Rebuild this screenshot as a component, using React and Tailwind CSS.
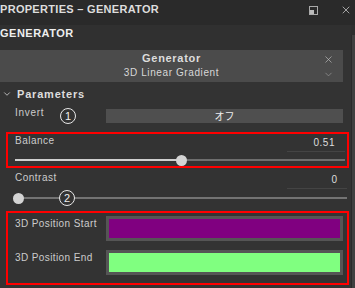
import React from 'react';
import { X, ChevronDown } from 'lucide-react';

const font = { fontFamily: '"Liberation Sans", "Noto Sans CJK JP", sans-serif' };

const Badge = ({ n }) => (
  <span className="w-[16px] h-[16px] rounded-full border-[1.5px] border-[#e8e8e8] bg-[#333] text-[#eee] text-[11px] leading-none flex items-center justify-center">
    {n}
  </span>
);

const Slider = ({ pos, filled }) => (
  <div className="relative h-[10px] ml-[7px] mr-[2px]">
    <div className="absolute left-0 right-0 top-[4px] h-[2px] bg-[#6e6e6e]" />
    {filled && <div className="absolute left-0 top-[4px] h-[2px] bg-[#cfcfcf]" style={{ width: pos }} />}
    <div className="absolute top-0 w-[11px] h-[11px] -ml-[5px] rounded-full bg-[#d4d4d4]" style={{ left: pos }} />
  </div>
);

export default function App() {
  return (
    <div className="w-[355px] h-[288px] bg-[#333] overflow-hidden flex flex-col text-[#e6e6e6]" style={font}>
      {/* Title bar */}
      <div className="h-[25px] bg-[#2a2a2a] flex items-start justify-between shrink-0">
        <span className="text-[11px] font-bold tracking-[0.3px] text-[#ddd] leading-[14px] pt-[2px]">PROPERTIES – GENERATOR</span>
        <div className="flex items-center gap-[22px] pr-[3px] pt-[4px]">
          <div className="w-[9px] h-[9px] border border-[#aaa] relative">
            <div className="absolute left-0 bottom-0 w-[4px] h-[4px] bg-[#bbb]" />
          </div>
          <X className="w-[12px] h-[12px] text-[#ccc]" strokeWidth={1.5} />
        </div>
      </div>

      <div className="flex flex-1">
        <div className="flex-1 flex flex-col">
          <div className="h-[25px] bg-[#303030] flex items-start">
            <span className="text-[11px] font-bold tracking-[0.5px] text-[#eee] leading-[14px] pt-[1px]">GENERATOR</span>
          </div>

          {/* Generator box */}
          <div className="h-[32px] w-[343px] bg-[#4b4b4b] flex flex-col items-center justify-center relative">
            <span className="text-[11px] font-bold tracking-[0.7px] text-[#ddd] leading-[14px] -mt-[2px]">Generator</span>
            <span className="text-[10px] tracking-[0.6px] text-[#d8d8d8] leading-[14px] mt-[1px]">3D Linear Gradient</span>
            <X className="absolute right-[9px] top-[4px] w-[11px] h-[11px] text-[#bbb]" strokeWidth={1.5} />
            <ChevronDown className="absolute right-[9px] top-[19px] w-[11px] h-[11px] text-[#999]" strokeWidth={1.5} />
          </div>

          {/* Parameters */}
          <div className="h-[24px] flex items-center gap-[5px] pl-[2px]">
            <ChevronDown className="w-[10px] h-[10px] text-[#ccc]" strokeWidth={2} />
            <span className="text-[11px] font-bold tracking-[0.8px] text-[#ddd]">Parameters</span>
          </div>

          <div className="h-[21px] flex items-start">
            <span className="w-[60px] pl-[15px] text-[10px] tracking-[0.7px] text-[#ccc] leading-[14px]">Invert</span>
            <span className="mt-[2px]"><Badge n="1" /></span>
            <div className="ml-[30px] mt-[3px] w-[237px] h-[14px] bg-[#4f4f4f] flex items-center justify-center text-[10px] text-[#eee]">オフ</div>
          </div>

          {/* Balance */}
          <div className="mt-[5px] ml-[6px] w-[343px] h-[36px] border-2 border-[#ff0000] flex flex-col">
            <div className="flex justify-between pl-[7px] pr-[12px] h-[17px]">
              <span className="text-[10px] tracking-[0.5px] text-[#ccc] leading-[14px]">Balance</span>
              <span className="text-[10px] text-[#ddd] pt-[2px] tracking-[0.5px] leading-[14px]">0.51</span>
            </div>
            <div className="ml-[279px] mr-[2px] h-px bg-[#444]" />
            <div className="mt-[3px]">
              <Slider pos={166} filled />
            </div>
          </div>

          {/* Contrast */}
          <div className="h-[43px] ml-[6px] w-[343px] flex flex-col pl-[2px] pr-[2px]">
            <div className="flex justify-between pl-[7px] pr-[10px] pt-[3px] h-[20px]">
              <span className="text-[10px] tracking-[0.5px] text-[#ccc] leading-[14px]">Contrast</span>
              <span className="text-[10px] text-[#ddd] pt-[2px] leading-[14px]">0</span>
            </div>
            <div className="ml-[279px] h-px bg-[#444]" />
            <div className="relative mt-[4px] ml-[5px]">
              <div className="relative h-[10px] -ml-[7px]">
                <div className="absolute left-[12px] right-0 top-[4px] h-[2px] bg-[#737373]" />
                <div className="absolute left-[7px] top-0 w-[11px] h-[11px] rounded-full bg-[#d4d4d4]" />
                <div className="absolute left-[53px] -top-[3px]">
                  <Badge n="2" />
                </div>
              </div>
            </div>
          </div>

          {/* Positions */}
          <div className="ml-[6px] w-[343px] h-[74px] border-2 border-[#ff0000] flex flex-col gap-[9px] pt-[3px]">
            <div className="flex">
              <span className="w-[98px] pl-[7px] pt-[1px] text-[10px] tracking-[0.4px] text-[#ccc] leading-[14px]">3D Position Start</span>
              <div className="w-[237px] h-[25px] bg-[#555] p-[3px]">
                <div className="w-full h-full bg-[#800080]" />
              </div>
            </div>
            <div className="flex">
              <span className="w-[98px] pl-[7px] pt-[1px] text-[10px] tracking-[0.4px] text-[#ccc] leading-[14px]">3D Position End</span>
              <div className="w-[237px] h-[25px] bg-[#555] p-[3px]">
                <div className="w-full h-full bg-[#80ff80]" />
              </div>
            </div>
          </div>
        </div>

        {/* Scrollbar */}
        <div className="w-[4px] flex flex-col">
          <div className="h-[10px] bg-[#2e2e2e]" />
          <div className="flex-1 bg-[#404040] border-l border-[#2a2a2a]" />
        </div>
      </div>
    </div>
  );
}
